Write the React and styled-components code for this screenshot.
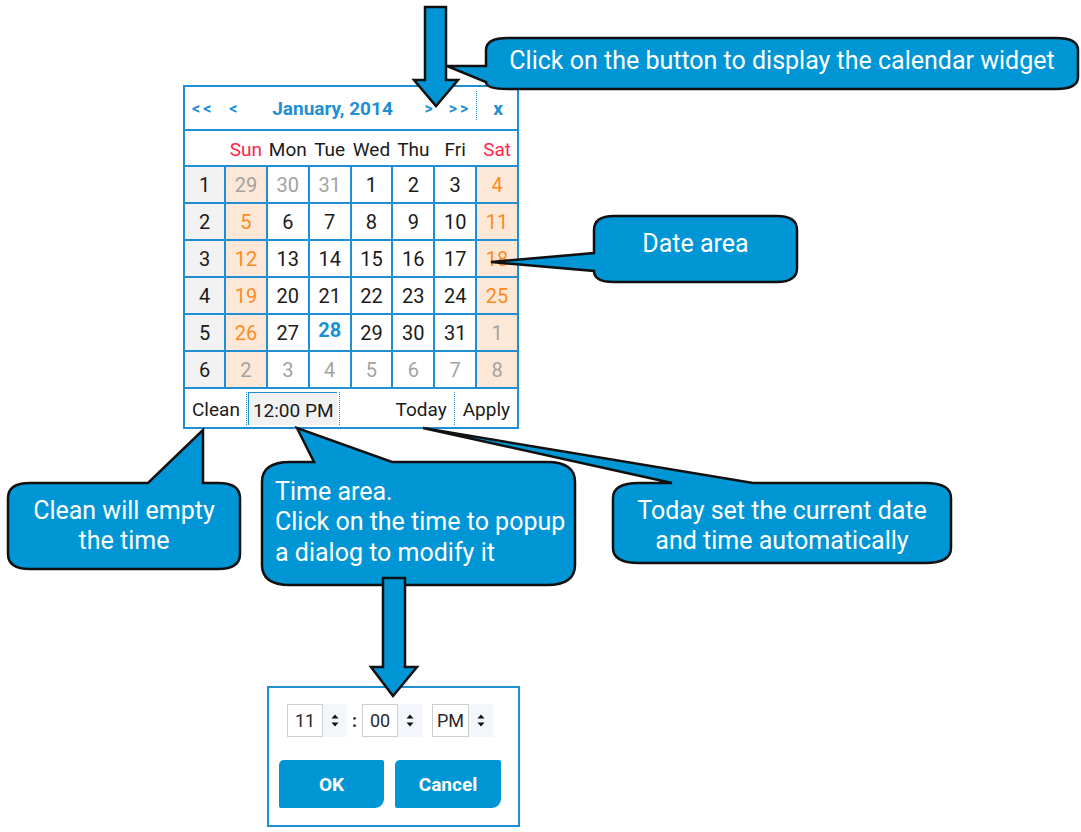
import React from "react";
import styled, { createGlobalStyle } from "styled-components";

const LINE = "#1e8fd2";
const FILL = "#0096d6";
const FONT = `Roboto, "Liberation Sans", sans-serif`;

const GlobalStyle = createGlobalStyle`
  html, body { margin: 0; padding: 0; background: #fff; }
  body { font-family: ${FONT}; }
`;

const Canvas = styled.div`
  position: relative;
  width: 1081px;
  height: 832px;
  overflow: hidden;
  background: #fff;
`;

// calendar widget
const Widget = styled.div`
  position: absolute;
  left: 183px;
  top: 85px;
  width: 336px;
  box-sizing: border-box;
  border: 2px solid ${LINE};
  background: #fff;
  display: flex;
  flex-direction: column;
`;

const Header = styled.div`
  display: flex;
  align-items: center;
  height: 42px;
  border-bottom: 2px solid ${LINE};
  color: ${LINE};
  font-weight: 700;
  white-space: nowrap;
`;

const Nav = styled.span`
  font-size: 16px;
  letter-spacing: 3px;
  margin-left: ${(p) => p.$gap || 0}px;
`;

const Title = styled.span`
  flex: 1;
  text-align: center;
  font-size: 19px;
`;

const Close = styled.span`
  font-size: 19px;
  margin: 0 14px 0 16px;
`;

const HeadSep = styled.span`
  align-self: stretch;
  border-left: 1px dotted ${LINE};
  margin: 4px 0 9px 5px;
`;

const DayNames = styled.div`
  display: grid;
  grid-template-columns: 39px repeat(7, 1fr);
  column-gap: 2px;
  height: 34px;
  border-bottom: 2px solid ${LINE};
  font-size: 19px;
`;

const DayName = styled.span`
  display: flex;
  align-items: center;
  justify-content: center;
  padding-top: 3px;
  color: ${(p) => (p.$weekend ? "#ff2448" : "#1b1b1b")};
`;

const Grid = styled.div`
  display: grid;
  grid-template-columns: 39px repeat(7, 1fr);
  grid-auto-rows: 35px;
  gap: 2px;
  background: ${LINE};
  border-bottom: 2px solid ${LINE};
  font-size: 20px;
`;

const Cell = styled.span`
  display: flex;
  align-items: center;
  justify-content: center;
  padding-bottom: ${(p) => (p.$today ? 5 : 0)}px;
  font-weight: ${(p) => (p.$today ? 700 : 400)};
  background: ${(p) =>
    p.$week ? "#f2f2f2" : p.$weekend ? "#fde8d7" : "#fff"};
  color: ${(p) =>
    p.$today
      ? LINE
      : p.$muted
      ? "#a3a3a3"
      : p.$weekend
      ? "#ff8a22"
      : "#1b1b1b"};
`;

const Footer = styled.div`
  display: flex;
  align-items: stretch;
  height: 38px;
  font-size: 19px;
  color: #1b1b1b;
  white-space: nowrap;
`;

const FootBtn = styled.span`
  display: flex;
  align-items: center;
  padding: 3px ${(p) => p.$right ?? 6}px 0 ${(p) => p.$left ?? 6}px;
`;

const FootSep = styled.span`
  border-left: 1px dotted ${LINE};
  margin: 3px 0 2px ${(p) => p.$gap || 0}px;
`;

const TimeBox = styled.span`
  display: flex;
  align-items: center;
  width: 89px;
  box-sizing: border-box;
  padding: 2px 0 0 4px;
  margin: 3px 0 2px 1px;
  background: #f1f1f1;
  border-left: 1px solid ${LINE};
  border-top: 1px solid ${LINE};
`;

const Spacer = styled.span`
  flex: 1;
`;

// time dialog
const Dialog = styled.div`
  position: absolute;
  left: 267px;
  top: 686px;
  width: 253px;
  height: 141px;
  box-sizing: border-box;
  border: 2px solid ${LINE};
  background: #fff;
  padding: 16px 0 0 10px;
  display: flex;
  flex-direction: column;
  gap: 23px;
`;

const SpinRow = styled.div`
  display: flex;
  height: 33px;
  margin-left: 8px;
  font-size: 18px;
  color: #2a2a2a;
`;

const NumBox = styled.span`
  display: flex;
  align-items: center;
  justify-content: center;
  width: ${(p) => p.$w || 36}px;
  box-sizing: border-box;
  border: 1px solid #cfcfcf;
  background: #fff;
`;

const Spin = styled.span`
  display: flex;
  align-items: center;
  justify-content: center;
  width: 24px;
  background: #f3f6fa;
`;

const Colon = styled.span`
  display: flex;
  align-items: center;
  justify-content: center;
  width: ${(p) => p.$w}px;
  font-weight: 700;
`;

const ButtonRow = styled.div`
  display: flex;
  gap: 11px;
`;

const DlgButton = styled.button`
  width: ${(p) => p.$w}px;
  height: 48px;
  border: none;
  padding: 0;
  background: ${FILL};
  color: #fff;
  font-family: ${FONT};
  font-size: 19px;
  font-weight: 700;
  border-radius: 5px 2px 9px 2px;
`;

// callouts
const Overlay = styled.svg`
  position: absolute;
  left: 0;
  top: 0;
  pointer-events: none;
`;

const Label = styled.div`
  position: absolute;
  left: ${(p) => p.$x}px;
  top: ${(p) => p.$y}px;
  width: ${(p) => p.$w}px;
  height: ${(p) => p.$h}px;
  box-sizing: border-box;
  padding-left: ${(p) => p.$pad || 0}px;
  display: flex;
  flex-direction: column;
  justify-content: center;
  align-items: ${(p) => (p.$pad ? "flex-start" : "center")};
  text-align: ${(p) => (p.$pad ? "left" : "center")};
  color: #fff;
  font-size: 25px;
  line-height: ${(p) => p.$lh || 30}px;
  white-space: nowrap;
`;

const bubbles = [
  "M 508 38 H 1056 Q 1078 38 1078 50 V 77 Q 1078 89 1056 89 H 508 Q 486 89 486 82 L 447 66 H 486 V 50 Q 486 38 508 38 Z",
  "M 614 216 H 777 Q 797 216 797 230 V 268 Q 797 282 777 282 H 614 Q 594 282 594 271 L 491 262 L 594 253 V 230 Q 594 216 614 216 Z",
  "M 30 483 H 148 L 203 430 V 483 H 218 Q 240 483 240 498 V 554 Q 240 569 218 569 H 30 Q 8 569 8 554 V 498 Q 8 483 30 483 Z",
  "M 290 462 H 314 L 297 428 L 392 462 H 547 Q 575 462 575 482 V 565 Q 575 585 547 585 H 290 Q 262 585 262 565 V 482 Q 262 462 290 462 Z",
  "M 639 483 H 672 L 423 428 L 753 483 H 925 Q 951 483 951 498 V 548 Q 951 563 925 563 H 639 Q 613 563 613 548 V 498 Q 613 483 639 483 Z",
];

const arrows = [
  "425,7 446,7 446,80 458,80 436,106 414,80 425,80",
  "383,578 405,578 405,667 417,667 393,696 371,667 383,667",
];

const NAMES = ["Sun", "Mon", "Tue", "Wed", "Thu", "Fri", "Sat"];

function buildWeeks() {
  const weeks = [];
  for (let r = 0; r < 6; r++) {
    const row = [];
    for (let c = 0; c < 7; c++) {
      let d = r * 7 + c - 2;
      let muted = false;
      if (d < 1) {
        d += 31;
        muted = true;
      } else if (d > 31) {
        d -= 31;
        muted = true;
      }
      row.push({ d, muted, weekend: c === 0 || c === 6, today: !muted && d === 28 });
    }
    weeks.push(row);
  }
  return weeks;
}

function SpinIcon() {
  return (
    <svg width="10" height="15" viewBox="0 0 10 15">
      <path d="M1.5 5.5 L5 1.5 L8.5 5.5 Z M1.5 9.5 L5 13.5 L8.5 9.5 Z" fill="#111" />
    </svg>
  );
}

function Calendar() {
  const weeks = buildWeeks();
  return (
    <Widget>
      <Header>
        <Nav $gap={7}>&lt;&lt;</Nav>
        <Nav $gap={15}>&lt;</Nav>
        <Title>January, 2014</Title>
        <Nav>&gt;</Nav>
        <Nav $gap={13}>&gt;&gt;</Nav>
        <HeadSep />
        <Close>x</Close>
      </Header>
      <DayNames>
        <span />
        {NAMES.map((n, i) => (
          <DayName key={n} $weekend={i === 0 || i === 6}>
            {n}
          </DayName>
        ))}
      </DayNames>
      <Grid>
        {weeks.map((row, r) => (
          <React.Fragment key={r}>
            <Cell $week>{r + 1}</Cell>
            {row.map((c, i) => (
              <Cell key={i} $weekend={c.weekend} $muted={c.muted} $today={c.today}>
                {c.d}
              </Cell>
            ))}
          </React.Fragment>
        ))}
      </Grid>
      <Footer>
        <FootBtn $left={7} $right={6}>Clean</FootBtn>
        <FootSep />
        <TimeBox>12:00 PM</TimeBox>
        <FootSep $gap={2} />
        <Spacer />
        <FootBtn $right={7}>Today</FootBtn>
        <FootSep />
        <FootBtn $left={8} $right={7}>Apply</FootBtn>
      </Footer>
    </Widget>
  );
}

function TimeDialog() {
  return (
    <Dialog>
      <SpinRow>
        <NumBox>11</NumBox>
        <Spin>
          <SpinIcon />
        </Spin>
        <Colon $w={15}>:</Colon>
        <NumBox>00</NumBox>
        <Spin>
          <SpinIcon />
        </Spin>
        <Colon $w={10} />
        <NumBox $w={37}>PM</NumBox>
        <Spin>
          <SpinIcon />
        </Spin>
      </SpinRow>
      <ButtonRow>
        <DlgButton $w={105}>OK</DlgButton>
        <DlgButton $w={106}>Cancel</DlgButton>
      </ButtonRow>
    </Dialog>
  );
}

export default function App() {
  return (
    <>
      <GlobalStyle />
      <Canvas>
        <Calendar />
        <TimeDialog />
        <Overlay width="1081" height="832" viewBox="0 0 1081 832">
          {bubbles.map((d, i) => (
            <path key={i} d={d} fill={FILL} stroke="#111" strokeWidth="2.5" strokeLinejoin="miter" />
          ))}
          {arrows.map((pts, i) => (
            <polygon key={i} points={pts} fill={FILL} stroke="#111" strokeWidth="2.5" />
          ))}
        </Overlay>
        <Label $x={486} $y={38} $w={592} $h={45}>
          Click on the button to display the calendar widget
        </Label>
        <Label $x={594} $y={216} $w={203} $h={56}>
          Date area
        </Label>
        <Label $x={8} $y={483} $w={232} $h={86}>
          <span>Clean will empty</span>
          <span>the time</span>
        </Label>
        <Label $x={262} $y={462} $w={313} $h={121} $pad={13} $lh={30.5}>
          <span>Time area.</span>
          <span>Click on the time to popup</span>
          <span>a dialog to modify it</span>
        </Label>
        <Label $x={613} $y={483} $w={338} $h={85}>
          <span>Today set the current date</span>
          <span>and time automatically</span>
        </Label>
      </Canvas>
    </>
  );
}
